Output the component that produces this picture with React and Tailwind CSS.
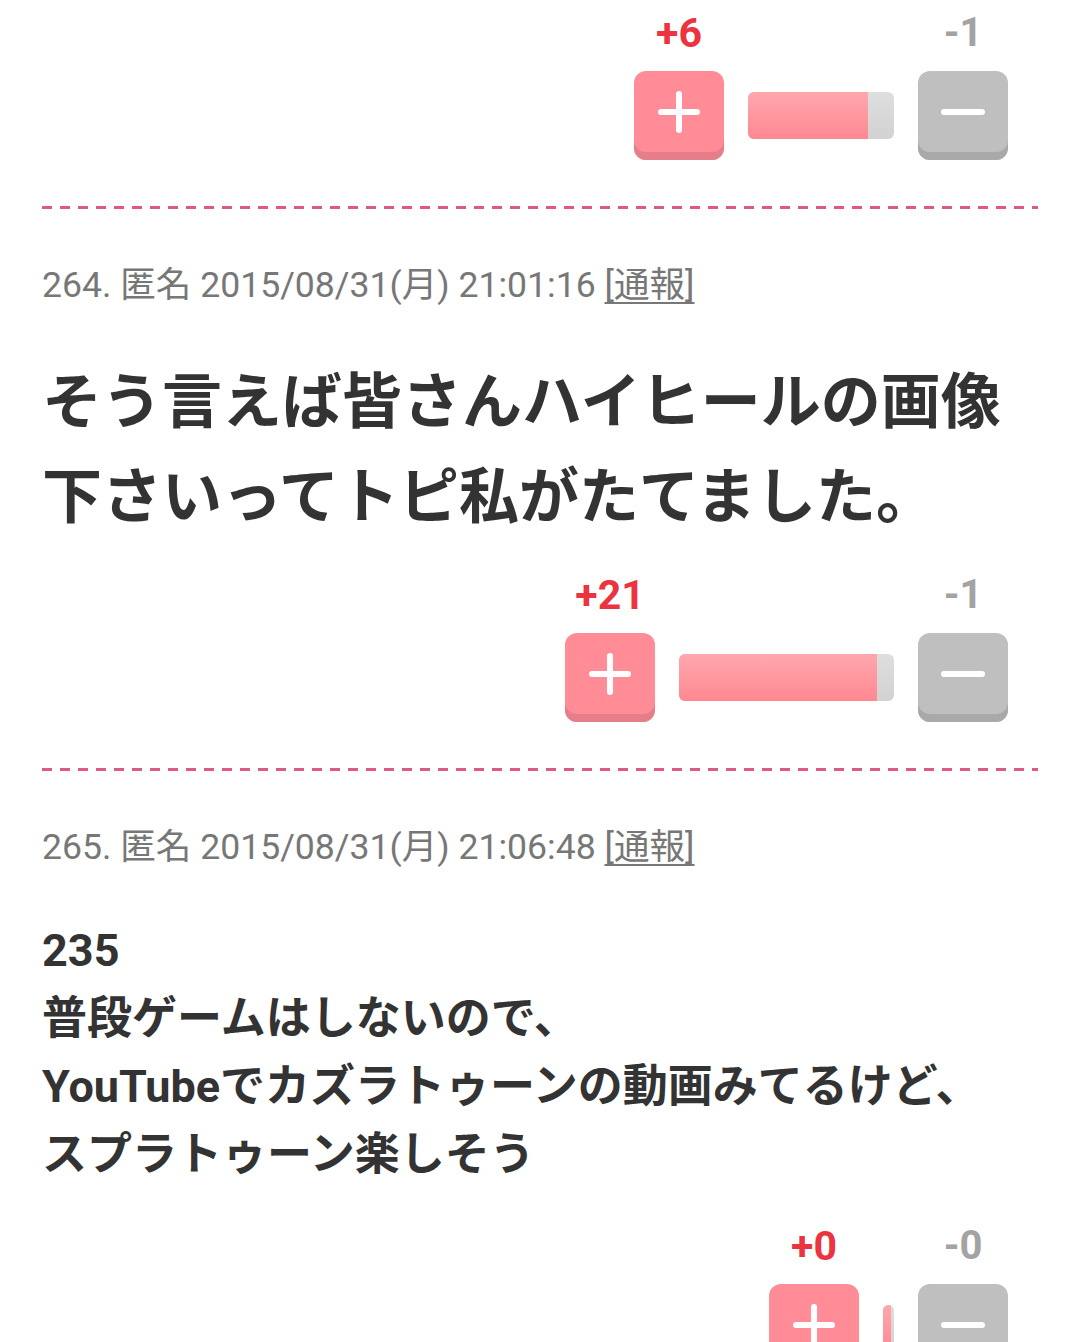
import React from "react";

const Plus = () => (
  <svg width="44" height="44" viewBox="0 0 44 44">
    <path d="M22 4v36M4 22h36" stroke="#fff" strokeWidth="6" strokeLinecap="round" />
  </svg>
);

const Minus = () => (
  <svg width="44" height="10" viewBox="0 0 44 10">
    <path d="M3 5h38" stroke="#fff" strokeWidth="6" strokeLinecap="round" />
  </svg>
);

const Separator = () => (
  <div className="h-[3px] bg-[repeating-linear-gradient(90deg,#df5a81_0_10px,transparent_10px_18px)]" />
);

const Vote = ({ plus, minus, barWidth, fillWidth, className }) => {
  return (
    <div className={`flex justify-end items-end gap-6 pr-[30px] ${className}`}>
      <div className="flex flex-col items-center w-[90px]">
        <span className="h-[48px] leading-[48px] text-[41px] font-bold text-[#ec3340]">{plus}</span>
        <div className="mt-[14px] w-[90px] h-[89px] rounded-[12px] bg-[#ff8c96] shadow-[inset_0_-8px_0_#e57e89] pb-[8px] flex items-center justify-center">
          <Plus />
        </div>
      </div>
      <div
        className="mb-[21px] h-[47px] rounded-[6px] overflow-hidden flex bg-[linear-gradient(#dedede,#d2d2d2)]"
        style={{ width: barWidth }}
      >
        <div
          className="h-full bg-[linear-gradient(#ffa7ae,#ff8892)]"
          style={{ width: fillWidth }}
        />
      </div>
      <div className="flex flex-col items-center w-[90px]">
        <span className="h-[48px] leading-[48px] text-[40px] font-bold text-[#a3a3a3]">{minus}</span>
        <div className="mt-[14px] w-[90px] h-[89px] rounded-[12px] bg-[#bfbfbf] shadow-[inset_0_-8px_0_#a9a9a9] pb-[8px] flex items-center justify-center">
          <Minus />
        </div>
      </div>
    </div>
  );
};

const Header = ({ text }) => (
  <div className="mt-[52px] h-[48px] leading-[48px] text-[35.6px] text-[#777777] whitespace-nowrap">
    {text} <span className="underline underline-offset-[5px] decoration-[2px]">[通報]</span>
  </div>
);

export default function App() {
  return (
    <div className="bg-white min-h-screen px-[42px] pt-[9px] overflow-hidden font-['Roboto','Noto_Sans_CJK_JP',sans-serif]">
      <Vote plus="+6" minus="-1" barWidth={146} fillWidth={120} />
      <div className="mt-[46px]">
        <Separator />
      </div>

      <Header text="264. 匿名 2015/08/31(月) 21:01:16" />
      <div className="mt-[46px] text-[60px] leading-[95px] font-bold text-[#333333]">
        <div>そう言えば皆さんハイヒールの画像</div>
        <div>下さいってトピ私がたてました。</div>
      </div>
      <Vote plus="+21" minus="-1" barWidth={215} fillWidth={198} className="mt-[26px]" />
      <div className="mt-[46px]">
        <Separator />
      </div>

      <Header text="265. 匿名 2015/08/31(月) 21:06:48" />
      <div className="mt-[46px] text-[45px] leading-[68px] font-bold text-[#333333]">
        <div>235</div>
        <div>普段ゲームはしないので、</div>
        <div>YouTubeでカズラトゥーンの動画みてるけど、</div>
        <div>スプラトゥーン楽しそう</div>
      </div>
      <Vote plus="+0" minus="-0" barWidth={11} fillWidth={8} className="mt-[33px]" />
    </div>
  );
}
